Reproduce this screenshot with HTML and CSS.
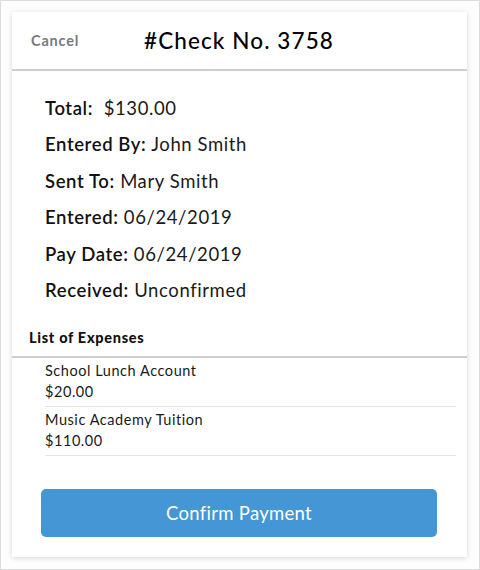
FILE: index.html
```html
<!DOCTYPE html>
<html>
<head>
<meta charset="utf-8">
<link rel="stylesheet" href="styles.css">
</head>
<body>
<div class="frame">
  <div class="card">
    <div class="header">
      <span class="cancel">Cancel</span>
      <span class="title">#Check No. 3758</span>
    </div>
    <div class="details">
      <div class="row"><span class="label">Total:</span>&nbsp; <span class="value">$130.00</span></div>
      <div class="row"><span class="label">Entered By:</span> <span class="value">John Smith</span></div>
      <div class="row"><span class="label">Sent To:</span> <span class="value">Mary Smith</span></div>
      <div class="row"><span class="label">Entered:</span> <span class="value">06/24/2019</span></div>
      <div class="row"><span class="label">Pay Date:</span> <span class="value">06/24/2019</span></div>
      <div class="row"><span class="label">Received:</span> <span class="value">Unconfirmed</span></div>
    </div>
    <div class="section-title">List of Expenses</div>
    <div class="expenses">
      <div class="item">
        <div class="item-name">School Lunch Account</div>
        <div class="item-amount">$20.00</div>
      </div>
      <div class="item">
        <div class="item-name">Music Academy Tuition</div>
        <div class="item-amount">$110.00</div>
      </div>
    </div>
    <div class="actions">
      <button class="confirm">Confirm Payment</button>
    </div>
  </div>
</div>
</body>
</html>
```
FILE: styles.css
```css
html, body {
  margin: 0;
  padding: 0;
  background: #ffffff;
}
body {
  font-family: Lato, "Noto Sans", sans-serif;
  color: #111111;
}
.frame {
  box-sizing: border-box;
  width: 480px;
  height: 570px;
  border: 1px solid #dcdcdc;
  padding: 11px 12px 12px 11px;
  background: #fdfdfd;
}
.card {
  box-sizing: border-box;
  height: 545px;
  background: #ffffff;
  box-shadow: 0 1px 5px rgba(0, 0, 0, 0.16);
  display: flex;
  flex-direction: column;
}
.header {
  height: 57px;
  border-bottom: 2px solid #cfcfcf;
  display: flex;
  align-items: center;
  padding-left: 19px;
}
.cancel {
  font-size: 14.5px;
  font-weight: 700;
  color: #7a7a7a;
  letter-spacing: 0.8px;
  width: 113px;
}
.title {
  font-size: 22.5px;
  font-weight: 500;
  color: #000;
  letter-spacing: 1.1px;
}
.details {
  padding: 19px 0 0 33px;
}
.row {
  height: 36.4px;
  line-height: 36.4px;
  font-size: 18.5px;
  letter-spacing: 0.6px;
}
.label {
  font-weight: 600;
}
.value {
  font-weight: 400;
  color: #1a1a1a;
}
.section-title {
  margin-top: 20px;
  padding-left: 17px;
  font-size: 14.5px;
  font-weight: 900;
  letter-spacing: 0.7px;
  line-height: 20px;
  padding-bottom: 8px;
  border-bottom: 2px solid #cfcfcf;
}
.expenses {
  margin: 0 11px 0 33px;
}
.item {
  padding: 3px 0 4px;
  border-bottom: 1px solid #e4e4e4;
  font-size: 14.5px;
  line-height: 20.5px;
  letter-spacing: 0.55px;
  color: #1a1a1a;
}
.actions {
  padding: 33px 0 0 29px;
}
.confirm {
  width: 396px;
  height: 48px;
  border: none;
  border-radius: 5px;
  background: #4496d5;
  color: #ffffff;
  font-family: Lato, "Noto Sans", sans-serif;
  font-size: 18.5px;
  letter-spacing: 0.3px;
}
```
